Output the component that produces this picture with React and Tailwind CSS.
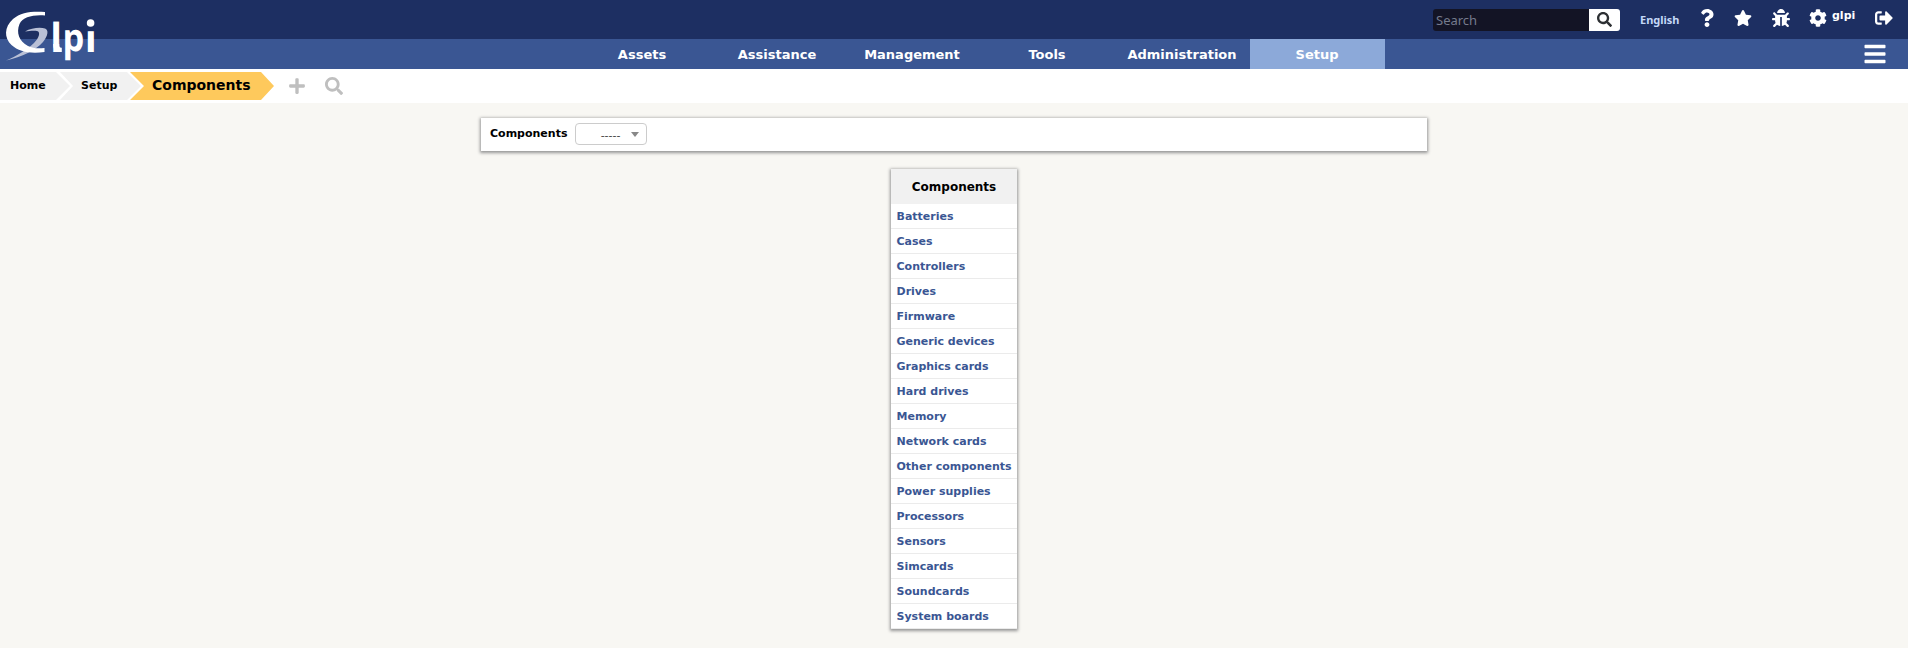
import React from "react";
import {
  FaBars, FaBug, FaCog, FaPlus, FaQuestion, FaSearch, FaSignOutAlt, FaStar,
} from "react-icons/fa";

const menu = ["Assets", "Assistance", "Management", "Tools", "Administration", "Setup"];

const components = [
  "Batteries", "Cases", "Controllers", "Drives", "Firmware", "Generic devices",
  "Graphics cards", "Hard drives", "Memory", "Network cards", "Other components",
  "Power supplies", "Processors", "Sensors", "Simcards", "Soundcards", "System boards",
];

function Logo() {
  return (
    <svg className="absolute left-0 top-0" width="110" height="66" viewBox="0 0 110 66" fill="#fff">
      <path d="M25 31.5C31 28 40 27 45 28.500C49 30 48 36 43 42C36 50 22 57 6 60.500C17 56 28 49 34 43C39 38 41 32 37 31C34 30.500 29 31 25 31.500Z" fill="#b9c0d6" />
      <path d="M45 12V15.500C33 14.500 23 17 19.500 24C16 33 19 41 28 46C33 48.500 38 48.500 44.500 48V52C31 54 19 52 11.500 45C4 38 4 27 13 19C21 12 33 11 45 12Z" />
      <g fontFamily="'Open Sans', sans-serif" fontWeight="700" fontSize="40" textRendering="geometricPrecision">
        <text transform="translate(50.300 52) scale(.96 1)">l</text>
        <text transform="translate(62.400 50.500) scale(.86 .95)">p</text>
        <text transform="translate(84.700 52) scale(.99 .95)">ı</text>
      </g>
      <circle cx="90.600" cy="23" r="3.800" />
      <path d="M53.200 44C53.200 50.500 56 52.500 61.800 52V47.800C59.800 48 59.200 47 59.200 44Z" />
    </svg>
  );
}

function Header() {
  return (
    <header className="relative">
      <div className="flex h-[39px] items-start justify-end bg-[#1d2f62] text-white">
        <div className="mt-[9px] flex h-[22px] w-[187px] overflow-hidden rounded-[3px]">
          <input
            placeholder="Search"
            className="w-[156px] bg-[#131425] px-[3px] pt-px font-['Noto_Sans',sans-serif] text-[13px] placeholder:text-[#757b8d] outline-none"
          />
          <button className="flex w-[31px] items-center justify-center bg-white pb-px text-[#2d3033]">
            <FaSearch size={15} />
          </button>
        </div>
        <span className="ml-[20px] mt-[12px] w-[40px] font-['Noto_Sans',sans-serif] text-[11px] font-bold leading-4 text-[#c4d8f8]">English</span>
        <FaQuestion size={18} className="ml-[17.5px] mt-[8.5px]" />
        <FaStar size={18} className="ml-[18.5px] mt-[8.5px]" />
        <FaBug size={18} className="ml-[20px] mt-[8.5px]" />
        <FaCog size={18} className="ml-[19px] mt-[8.5px]" />
        <span className="ml-[5px] mt-[9px] w-[24px] text-[11px] font-bold leading-[14px]">glpi</span>
        <FaSignOutAlt size={18} className="ml-[19px] mr-[15px] mt-[8.5px]" />
      </div>
      <nav className="flex h-[30px] bg-[#3a5693] pl-[575px] text-white">
        {menu.map((m) => (
          <a
            key={m}
            className={
              "flex w-[135px] items-center justify-center pr-px pt-px text-[13px] font-bold " +
              (m === "Setup" ? "bg-[#8ca9d9]" : "")
            }
          >
            {m}
          </a>
        ))}
        <FaBars size={24} className="ml-auto mr-[21px] mt-[2.5px]" />
      </nav>
      <Logo />
    </header>
  );
}

function Breadcrumb() {
  return (
    <div className="flex h-[34px] bg-white pt-[3px] font-bold text-black">
      <div className="flex h-[28px] w-[70px] items-center bg-[#f1f1f1] pl-[10px] text-[11px] [clip-path:polygon(0_0,56px_0,70px_50%,56px_100%,0_100%)]">Home</div>
      <div className="-ml-[10px] flex h-[28px] w-[81px] items-center bg-[#f1f1f1] pl-[21px] text-[11px] [clip-path:polygon(0_0,67px_0,81px_50%,67px_100%,0_100%,13px_50%)]">Setup</div>
      <div className="-ml-[11px] flex h-[28px] w-[144px] items-center bg-[#fec95c] pb-[2px] pl-[22px] text-[14px] [clip-path:polygon(0_0,131px_0,144px_50%,131px_100%,0_100%,14px_50%)]">Components</div>
      <FaPlus size={18} className="ml-[13.5px] mt-[5px] text-[#bfbfbf]" />
      <FaSearch size={18} className="ml-[19px] mt-[5px] text-[#bfbfbf]" />
    </div>
  );
}

export default function App() {
  return (
    <div className="min-h-screen bg-[#f8f7f3] font-['DejaVu_Sans',sans-serif]">
      <Header />
      <Breadcrumb />
      <main className="flex flex-col items-center pt-[15px]">
        <div className="flex h-[33px] w-[946px] items-start bg-white pl-[9px] text-[11px] text-black shadow-[0_1px_3px_1px_#959595]">
          <span className="mt-[8px] w-[85px] font-bold leading-4">Components</span>
          <div className="mt-[5px] flex h-[22px] w-[72px] items-center justify-end rounded-[4px] border border-[#ccc] pr-[7px]">
            <span className="mr-[10.5px] pt-[4px] text-[#444]">-----</span>
            <svg width="8" height="5" viewBox="0 0 8 5"><path d="M0 0H8L4 5Z" fill="#888" /></svg>
          </div>
        </div>
        <section className="mt-[18px] w-[126px] bg-white shadow-[0_1px_3px_1px_#959595]">
          <h2 className="flex h-[35px] items-center justify-center bg-[#f1f1f1] pt-px text-[12px] font-bold text-black">Components</h2>
          <ul>
            {components.map((c) => (
              <li key={c} className="h-[25px] whitespace-nowrap border-b border-[#ebebeb] pl-[5.5px] text-[11px] font-bold leading-[25px] text-[#3a5693]">{c}</li>
            ))}
          </ul>
        </section>
      </main>
    </div>
  );
}
